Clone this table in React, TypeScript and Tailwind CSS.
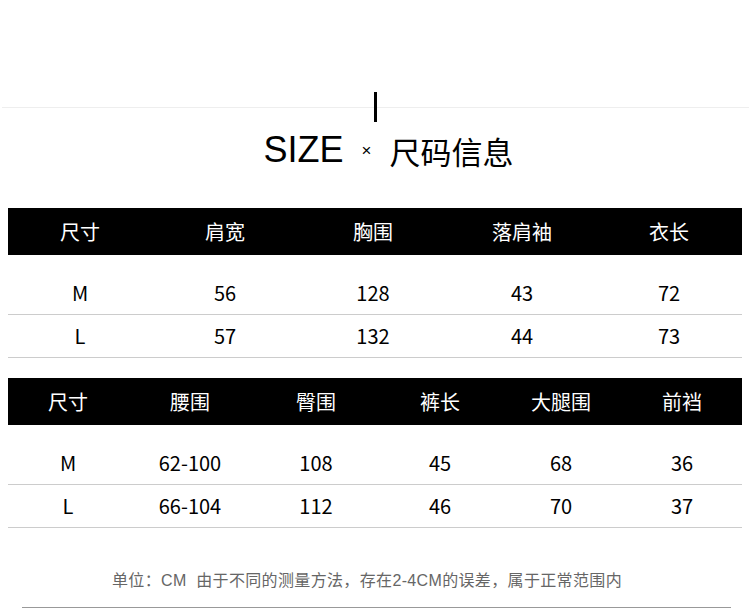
import React from "react";

const cjk = { fontFamily: '"Noto Sans CJK SC", "Noto Sans", sans-serif' };
const mixed = { fontFamily: '"Liberation Sans", "Noto Sans CJK SC", sans-serif' };

const t1Head = ["尺寸", "肩宽", "胸围", "落肩袖", "衣长"];
const t1Rows = [
  ["M", "56", "128", "43", "72"],
  ["L", "57", "132", "44", "73"],
];
const t2Head = ["尺寸", "腰围", "臀围", "裤长", "大腿围", "前裆"];
const t2Rows = [
  ["M", "62-100", "108", "45", "68", "36"],
  ["L", "66-104", "112", "46", "70", "37"],
];

function Table({ head, rows, cols }: { head: string[]; rows: string[][]; cols: string }) {
  return (
    <div className="mx-[8px]" style={cjk}>
      <div className={`grid ${cols} h-[47px] items-center bg-black text-white text-[20px] leading-none`}>
        {head.map((h, i) => (
          <div key={i} className="text-center">{h}</div>
        ))}
      </div>
      <div className="h-[17px]" />
      {rows.map((r, ri) => (
        <div key={ri} className={`grid ${cols} h-[43px] items-center border-b border-[#cccccc] text-[20px] text-black leading-none`}>
          {r.map((c, ci) => (
            <div key={ci} className="text-center">{c}</div>
          ))}
        </div>
      ))}
    </div>
  );
}

export default function App() {
  return (
    <div className="w-[750px] h-[609px] bg-white overflow-hidden">
      <div className="h-[92px]" />
      <div className="relative h-[30px] flex justify-center">
        <div className="absolute left-[2px] right-[1px] top-[15px] h-px bg-[#eeeeee]" />
        <div className="relative w-[3px] h-[30px] bg-black" />
      </div>
      <div className="h-[56px] pl-[27px] flex items-center justify-center text-black">
        <span className="text-[36px] leading-none" style={{ fontFamily: '"Liberation Sans", Arial, sans-serif' }}>SIZE</span>
        <span className="text-[17px] leading-none mx-[18px]" style={{ fontFamily: '"Liberation Sans", Arial, sans-serif' }}>×</span>
        <span className="text-[31px] leading-none" style={cjk}>尺码信息</span>
      </div>
      <div className="h-[30px]" />
      <Table head={t1Head} rows={t1Rows} cols="grid-cols-[144px_146px_150px_148px_146px]" />
      <div className="h-[20px]" />
      <Table head={t2Head} rows={t2Rows} cols="grid-cols-[120px_124px_128px_120px_122px_120px]" />
      <div className="h-[41px]" />
      <div className="h-[24px] pr-[16px] flex items-center justify-center text-[16px] tracking-[0.35px] text-[#666666] leading-none whitespace-pre" style={mixed}>
        {"单位：CM  由于不同的测量方法，存在2-4CM的误差，属于正常范围内"}
      </div>
      <div className="h-[14px]" />
      <div className="ml-[22px] w-[709px] h-px bg-[#999999]" />
    </div>
  );
}
